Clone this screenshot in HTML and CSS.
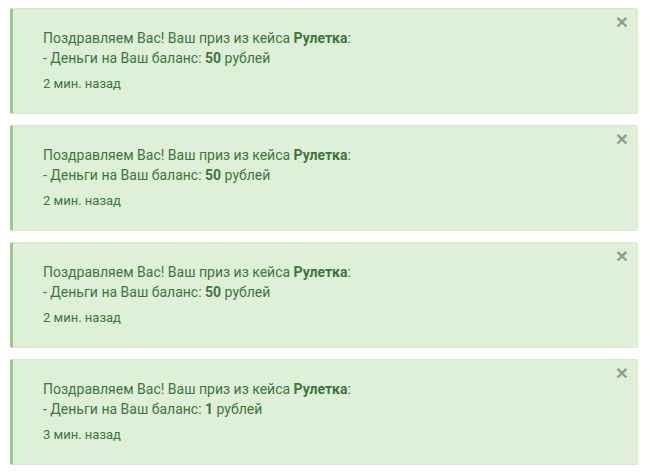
FILE: index.html
```html
<!DOCTYPE html>
<html lang="ru">
<head>
    <meta charset="UTF-8">
    <meta name="viewport" content="width=device-width, initial-scale=1.0">
    <title>Уведомления</title>
    <link rel="stylesheet" href="styles.css">
</head>
<body>
    <div class="notices">
        <div class="notice">
            <button class="notice-close" type="button">&times;</button>
            <p class="notice-text">Поздравляем Вас! Ваш приз из кейса <b>Рулетка</b>:<br>- Деньги на Ваш баланс: <b>50</b> рублей</p>
            <span class="notice-time">2 мин. назад</span>
        </div>
        <div class="notice">
            <button class="notice-close" type="button">&times;</button>
            <p class="notice-text">Поздравляем Вас! Ваш приз из кейса <b>Рулетка</b>:<br>- Деньги на Ваш баланс: <b>50</b> рублей</p>
            <span class="notice-time">2 мин. назад</span>
        </div>
        <div class="notice">
            <button class="notice-close" type="button">&times;</button>
            <p class="notice-text">Поздравляем Вас! Ваш приз из кейса <b>Рулетка</b>:<br>- Деньги на Ваш баланс: <b>50</b> рублей</p>
            <span class="notice-time">2 мин. назад</span>
        </div>
        <div class="notice">
            <button class="notice-close" type="button">&times;</button>
            <p class="notice-text">Поздравляем Вас! Ваш приз из кейса <b>Рулетка</b>:<br>- Деньги на Ваш баланс: <b>1</b> рублей</p>
            <span class="notice-time">3 мин. назад</span>
        </div>
    </div>
</body>
</html>
```

FILE: styles.css
```css
body {
    margin: 0;
    padding: 0;
    background-color: #fff;
    font-family: Roboto, "Noto Sans", sans-serif;
    color: #3c763d;
}

.notices {
    padding: 8px 12px 0 10px;
    display: flex;
    flex-direction: column;
    gap: 11px;
}

.notice {
    position: relative;
    height: 106px;
    box-sizing: border-box;
    background-color: #dff0d8;
    border: 1px solid #d6e9c6;
    border-left: 3px solid #9cc78c;
    border-radius: 2px;
    padding: 19px 40px 0 30px;
}

.notice-text {
    margin: 0;
    font-size: 14px;
    line-height: 20px;
}

.notice-text b {
    font-weight: 700;
}

.notice-time {
    display: block;
    margin-top: 7px;
    font-size: 13px;
    line-height: 18px;
}

.notice-close {
    position: absolute;
    top: 2px;
    right: 9px;
    padding: 0;
    border: none;
    background: none;
    font-family: Arial, "Liberation Sans", sans-serif;
    font-size: 21px;
    font-weight: 700;
    line-height: 1;
    color: #000;
    opacity: 0.35;
    cursor: pointer;
}
```
